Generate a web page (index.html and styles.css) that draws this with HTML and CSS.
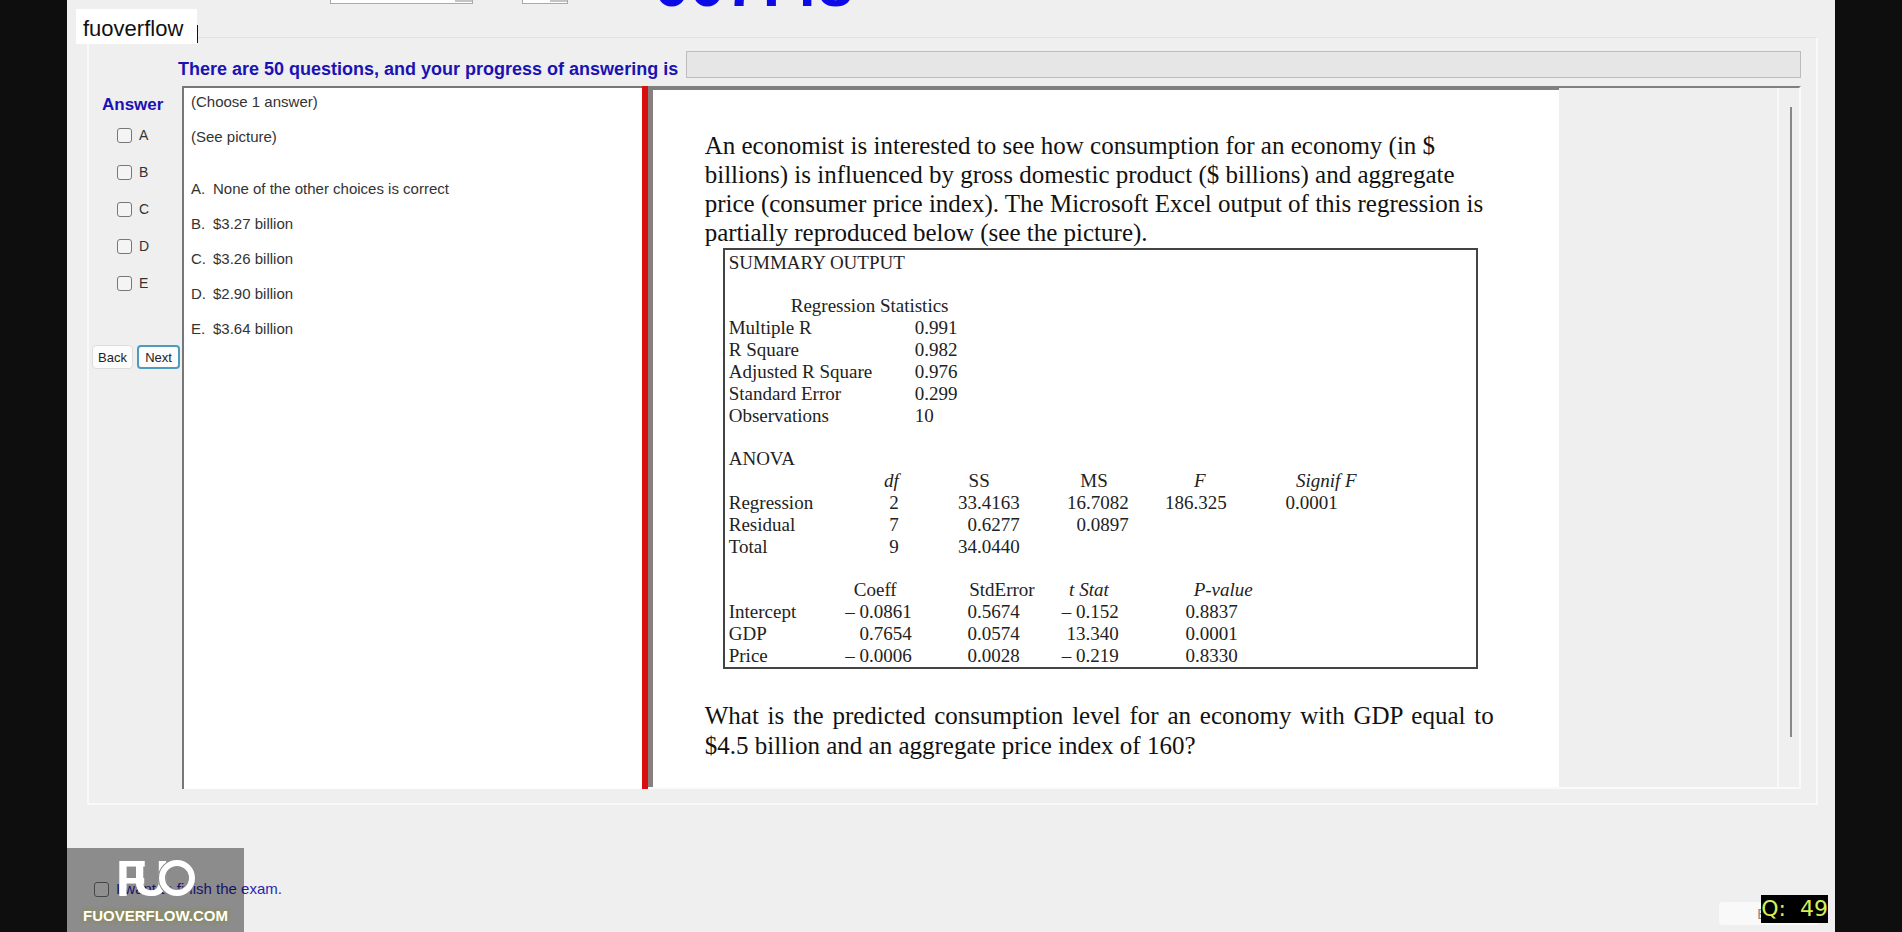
FILE: index.html
```html
<!DOCTYPE html>
<html lang="en">
<head>
<meta charset="utf-8">
<title>Exam client</title>
<link rel="stylesheet" href="styles.css">
</head>
<body>
<main class="app">
  <header class="top">
    <select class="pick pick-wide" aria-label="Font"><option></option></select>
    <select class="pick pick-small" aria-label="Size"><option></option></select>
    <div class="timer">007:48</div>
    <div class="tag">fuoverflow</div>
  </header>

  <section class="group">
    <div class="progress-row">
      <p class="progress-label">There are 50 questions, and your progress of answering is</p>
      <div class="progress" role="progressbar" aria-label="Progress" aria-valuenow="0"></div>
    </div>
    <div class="work">
      <aside class="answers">
        <h2 class="answers-title">Answer</h2>
        <div class="answer-list">
          <label class="answer"><input class="box" type="checkbox">A</label>
          <label class="answer"><input class="box" type="checkbox">B</label>
          <label class="answer"><input class="box" type="checkbox">C</label>
          <label class="answer"><input class="box" type="checkbox">D</label>
          <label class="answer"><input class="box" type="checkbox">E</label>
        </div>
        <div class="nav">
          <button class="btn" type="button">Back</button>
          <button class="btn btn-focus" type="button">Next</button>
        </div>
      </aside>

      <section class="choices">
        <p>(Choose 1 answer)</p>
        <p>(See picture)</p>
        <ul class="choice-list">
          <li><span>A.</span>None of the other choices is correct</li>
          <li><span>B.</span>$3.27 billion</li>
          <li><span>C.</span>$3.26 billion</li>
          <li><span>D.</span>$2.90 billion</li>
          <li><span>E.</span>$3.64 billion</li>
        </ul>
      </section>

      <div class="splitter"></div>

      <section class="viewer">
        <article class="sheet">
          <p class="lead">An economist is interested to see how consumption for an economy (in $<br>billions) is influenced by gross domestic product ($ billions) and aggregate<br>price (consumer price index). The Microsoft Excel output of this regression is<br>partially reproduced below (see the picture).</p>
          <div class="output">
            <p>SUMMARY OUTPUT</p>
            <table class="stats">
              <caption>Regression Statistics</caption>
              <tr><td>Multiple R</td><td>0.991</td></tr>
              <tr><td>R Square</td><td>0.982</td></tr>
              <tr><td>Adjusted R Square</td><td>0.976</td></tr>
              <tr><td>Standard Error</td><td>0.299</td></tr>
              <tr><td>Observations</td><td>10</td></tr>
            </table>
            <p class="after-gap">ANOVA</p>
            <table class="grid anova">
              <colgroup><col class="c1"><col class="c2"><col class="c3"><col class="c4"><col class="c5"><col class="c6"></colgroup>
              <tr><th></th><th class="in-s"><i>df</i></th><th class="in-l">SS</th><th class="in-m">MS</th><th class="in-m"><i>F</i></th><th class="in-s"><i>Signif F</i></th></tr>
              <tr><td>Regression</td><td class="in-s">2</td><td>33.4163</td><td>16.7082</td><td>186.325</td><td class="in-m">0.0001</td></tr>
              <tr><td>Residual</td><td class="in-s">7</td><td>0.6277</td><td>0.0897</td><td></td><td></td></tr>
              <tr><td>Total</td><td class="in-s">9</td><td>34.0440</td><td></td><td></td><td></td></tr>
            </table>
            <table class="grid coeff after-gap">
              <colgroup><col class="c1"><col class="c2"><col class="c3"><col class="c4"><col class="c5"></colgroup>
              <tr><th></th><th class="in-p">Coeff</th><th>StdError</th><th class="in-n"><i>t Stat</i></th><th><i>P-value</i></th></tr>
              <tr><td>Intercept</td><td>– 0.0861</td><td class="in-p">0.5674</td><td>– 0.152</td><td class="in-p">0.8837</td></tr>
              <tr><td>GDP</td><td>0.7654</td><td class="in-p">0.0574</td><td>13.340</td><td class="in-p">0.0001</td></tr>
              <tr><td>Price</td><td>– 0.0006</td><td class="in-p">0.0028</td><td>– 0.219</td><td class="in-p">0.8330</td></tr>
            </table>
          </div>
          <p class="ask">What is the predicted consumption level for an economy with GDP equal to $4.5 billion and an aggregate price index of 160?</p>
        </article>
        <div class="rail"><span class="rail-line"></span></div>
      </section>
    </div>
  </section>

  <footer class="bottom">
    <label class="finish"><input class="box" type="checkbox">I want to finish the exam.</label>
    <button class="exit" type="button">Exit</button>
    <div class="counter">Q:&nbsp; 49</div>
    <div class="mark">
      <svg class="mark-logo" viewBox="0 0 78 40" aria-hidden="true">
        <text class="mark-letter" x="-2" y="37">F</text>
        <text class="mark-letter" x="15" y="37">U</text>
        <circle cx="59" cy="19" r="15" fill="none" stroke="#8c8c8c" stroke-width="8"/>
        <circle cx="59" cy="19" r="15" fill="none" stroke="#fff" stroke-width="6"/>
      </svg>
      <div class="mark-name">FUOVERFLOW.COM</div>
    </div>
  </footer>
</main>
</body>
</html>
```
FILE: styles.css
```css
* { box-sizing: border-box; }

body {
  margin: 0;
  background: #0e0e0e;
  font-family: "Liberation Sans", Arial, sans-serif;
  font-size: 15px;
  color: #333;
}

p, h2, ul { margin: 0; padding: 0; }

.app {
  display: flex;
  flex-direction: column;
  min-height: 100vh;
  margin: 0 67px;
  background: #efefef;
  overflow: hidden;
}

/* header */
.top { position: relative; height: 37px; }

.pick {
  appearance: none;
  position: absolute;
  top: -20px;
  height: 24px;
  border: 1px solid #aaa;
  background: #fff linear-gradient(#c4c4c4, #c4c4c4) no-repeat right top / 17px 21px;
}
.pick-wide { left: 263px; width: 143px; }
.pick-small { left: 455px; width: 46px; }

.timer {
  position: absolute;
  top: -52px;
  left: 587px;
  font-size: 64px;
  font-weight: bold;
  line-height: 72px;
  color: #0b0be8;
}

.tag {
  position: absolute;
  z-index: 1;
  top: 9px;
  left: 9px;
  padding: 4px 14px 0 7px;
  background: #fff;
  color: #111;
  font-size: 22px;
  line-height: 31px;
}
.tag::after {
  content: "";
  position: absolute;
  right: -1px;
  bottom: 1px;
  width: 1px;
  height: 18px;
  background: #111;
}

/* question group */
.group {
  margin: 0 17px 0 20px;
  padding: 13px 15px 14px 3px;
  border: 2px solid #f9f9f9;
  border-top: 1px solid #e2e2e2;
}

.progress-row {
  display: flex;
  align-items: flex-start;
  padding-left: 86px;
}
.progress-label {
  width: 508px;
  padding-top: 8px;
  font-size: 18px;
  font-weight: bold;
  line-height: 20px;
  color: #1a12b4;
  white-space: nowrap;
}
.progress {
  flex: 1;
  height: 27px;
  border: 1px solid #bcbcbc;
  background: #e6e6e6;
}

.work {
  display: grid;
  grid-template-columns: 90px minmax(0, 460fr) 6px minmax(0, 1154fr);
  margin-top: 7px;
}

.answers { padding-top: 9px; }
.answers-title {
  padding-left: 10px;
  font-size: 17px;
  line-height: 20px;
  color: #1a12b4;
}
.answer-list {
  display: grid;
  gap: 17px;
  padding: 10px 0 0 25px;
}
.answer {
  display: flex;
  align-items: center;
  gap: 7px;
  font-size: 14px;
  line-height: 20px;
}
.box {
  appearance: none;
  width: 15px;
  height: 15px;
  margin: 0;
  border: 1px solid #777;
  border-radius: 3px;
  background: #f4f4f4;
}
.nav {
  display: flex;
  gap: 4px;
  padding: 52px 2px 0 0;
}
.btn {
  height: 24px;
  padding: 0;
  flex: 1;
  border: 1px solid #ddd;
  border-radius: 4px;
  background: #fcfcfc;
  font: 13px "Liberation Sans", Arial, sans-serif;
  color: #222;
}
.btn-focus { border: 2px solid #4d9cc0; }

.choices {
  padding: 4px 7px;
  border-top: 2px solid #777;
  border-left: 2px solid #777;
  background: #fff;
  line-height: 20px;
}
.choices p { margin-bottom: 15px; }
.choice-list {
  display: grid;
  gap: 15px;
  margin-top: 32px;
  list-style: none;
}
.choice-list li { display: flex; }
.choice-list span { width: 22px; }

.splitter { background: #d90f0f; }

.viewer {
  display: flex;
  justify-content: space-between;
  border-top: 2px solid #808080;
  border-right: 2px solid #fafafa;
  border-bottom: 2px solid #fafafa;
}

.sheet {
  flex: 0 1 911px;
  padding: 41px 65px 26px 52px;
  border-top: 2px solid #808080;
  border-left: 5px solid #868080;
  background: #fff;
  color: #111;
  font-family: "Liberation Serif", "Times New Roman", serif;
  font-size: 25px;
  line-height: 29px;
}
.lead { white-space: nowrap; }
.ask { padding-top: 32px; text-align: justify; line-height: 30px; }

.output {
  max-width: 755px;
  margin: 1px 0 0 18px;
  padding: 2px 0 0 4px;
  border: 2px solid #444;
  font-size: 19px;
  line-height: 22px;
  color: #222;
}
.after-gap { margin-top: 21px; }

.output table { border-collapse: collapse; table-layout: fixed; }
.output td, .output th { padding: 0; font-weight: normal; height: 22px; white-space: nowrap; }
.stats { margin-top: 21px; width: 286px; }
.stats caption { padding-left: 62px; text-align: left; white-space: nowrap; }
.stats td:first-child { width: 186px; }

.output .grid td, .output .grid th { text-align: right; }
.output .grid td:first-child { text-align: left; }
.output .grid .in-s { padding-right: 2px; }
.output .grid .in-n { padding-right: 10px; }
.output .grid .in-p { padding-right: 15px; }
.output .grid .in-m { padding-right: 21px; }
.output .grid .in-l { padding-right: 30px; }
.anova { width: 630px; }
.anova .c1 { width: 100px; }
.anova .c2 { width: 72px; }
.anova .c3 { width: 119px; }
.anova .c4 { width: 109px; }
.anova .c5 { width: 98px; }
.anova .c6 { width: 132px; }
.coeff { width: 524px; }
.coeff .c1 { width: 100px; }
.coeff .c2 { width: 83px; }
.coeff .c3 { width: 123px; }
.coeff .c4 { width: 84px; }
.coeff .c5 { width: 134px; }

.rail {
  display: flex;
  width: 22px;
  padding: 19px 0 50px 11px;
  border-left: 2px solid #f8f8f8;
}
.rail-line { width: 2px; background: #888; }

/* footer */
.bottom { position: relative; flex: 1; min-height: 126px; }

.finish {
  position: absolute;
  bottom: 33px;
  left: 27px;
  display: flex;
  align-items: center;
  gap: 7px;
  line-height: 20px;
  color: #2c1fb4;
}
.exit {
  position: absolute;
  right: 16px;
  bottom: 7px;
  width: 100px;
  height: 23px;
  border: 0;
  border-radius: 4px;
  background: #f9f9f9;
  color: #888;
  font: 14px "Liberation Sans", Arial, sans-serif;
}
.counter {
  position: absolute;
  right: 7px;
  bottom: 9px;
  background: #000;
  color: #d8ee58;
  font-family: "DejaVu Sans", sans-serif;
  font-size: 22px;
  line-height: 28px;
}
.mark {
  position: absolute;
  left: 0;
  bottom: 0;
  width: 177px;
  height: 84px;
  padding-top: 11px;
  background: rgba(0, 0, 0, 0.41);
  text-align: center;
}
.mark-logo {
  display: block;
  width: 78px;
  height: 40px;
  margin-left: 51px;
  overflow: visible;
}
.mark-letter {
  fill: #fff;
  font: bold 50px "Liberation Sans", Arial, sans-serif;
}
.mark-name {
  padding-top: 7px;
  color: #fff;
  font: bold 15px "Liberation Sans Narrow", "Liberation Sans", sans-serif;
  line-height: 20px;
  text-shadow: 0 0 5px #8a8a20;
}
```
